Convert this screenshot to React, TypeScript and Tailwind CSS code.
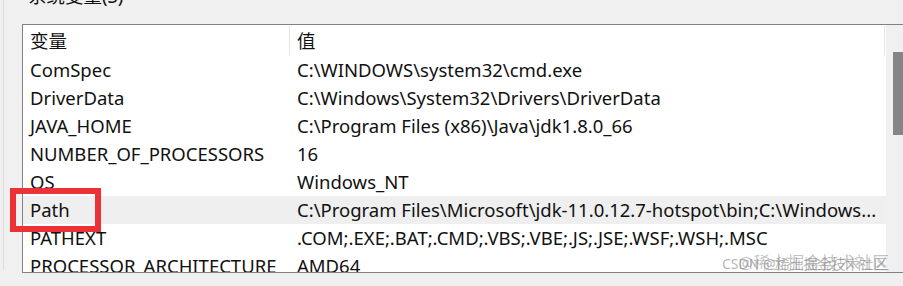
import React from "react";

const rows: [string, string][] = [
  ["ComSpec", "C:\\WINDOWS\\system32\\cmd.exe"],
  ["DriverData", "C:\\Windows\\System32\\Drivers\\DriverData"],
  ["JAVA_HOME", "C:\\Program Files (x86)\\Java\\jdk1.8.0_66"],
  ["NUMBER_OF_PROCESSORS", "16"],
  ["OS", "Windows_NT"],
  ["Path", "C:\\Program Files\\Microsoft\\jdk-11.0.12.7-hotspot\\bin;C:\\Windows..."],
  ["PATHEXT", ".COM;.EXE;.BAT;.CMD;.VBS;.VBE;.JS;.JSE;.WSF;.WSH;.MSC"],
  ["PROCESSOR_ARCHITECTURE", "AMD64"],
];

export default function App() {
  return (
    <div
      className="relative w-[903px] h-[286px] overflow-hidden bg-[#f0f0f0] pl-[3px] text-black"
      style={{ fontFamily: '"Noto Sans", "Noto Sans CJK SC", sans-serif' }}
    >
      <div className="h-full border-l border-[#dcdcdc] pl-[18px]">
        <div className="-mt-[16px] h-[40px] pl-[6px] text-[18.5px] leading-[24px] text-[#111] whitespace-nowrap">
          系统变量(S)
        </div>
        <div className="flex h-[249px] border-t border-l border-b border-[#828282] bg-white overflow-hidden">
          <div className="flex-1 flex flex-col overflow-hidden text-[18.5px] text-[#111]">
            <div className="flex h-[31px] shrink-0 items-stretch">
              <div className="w-[267px] shrink-0 flex items-center pl-[7px] border-r border-[#e5e5e5] mt-[1px] mb-[1px]">
                变量
              </div>
              <div className="w-[595px] shrink-0 flex items-center pl-[7px] border-r border-[#e5e5e5] mt-[1px] mb-[1px]">
                值
              </div>
            </div>
            {rows.map(([k, v]) => (
              <div
                key={k}
                className={
                  "flex h-[28px] shrink-0 items-center whitespace-nowrap " +
                  (k === "Path" ? "bg-[#efefef]" : "")
                }
              >
                <div className="w-[267px] shrink-0 pl-[7px]">{k}</div>
                <div className="flex-1 pl-[7px]">{v}</div>
              </div>
            ))}
          </div>
          <div className="w-[17px] shrink-0 bg-[#f0f0f0] pt-[27px] pl-[7px]">
            <div className="h-[83px] w-full bg-[#858585]" />
          </div>
        </div>
      </div>
      <div className="absolute left-[10px] top-[188px] w-[91px] h-[44px] border-[6px] border-[#ec3237]" />
      <div className="absolute left-[722px] top-[255px] text-[14px] leading-[18px] text-[rgba(120,120,120,0.55)] whitespace-nowrap">
        CSDN @稀土掘金技术社区
      </div>
      <div className="absolute left-[738px] top-[253px] text-[17px] leading-[20px] text-[rgba(120,120,120,0.45)] whitespace-nowrap">
        @稀土掘金技术社区
      </div>
    </div>
  );
}
